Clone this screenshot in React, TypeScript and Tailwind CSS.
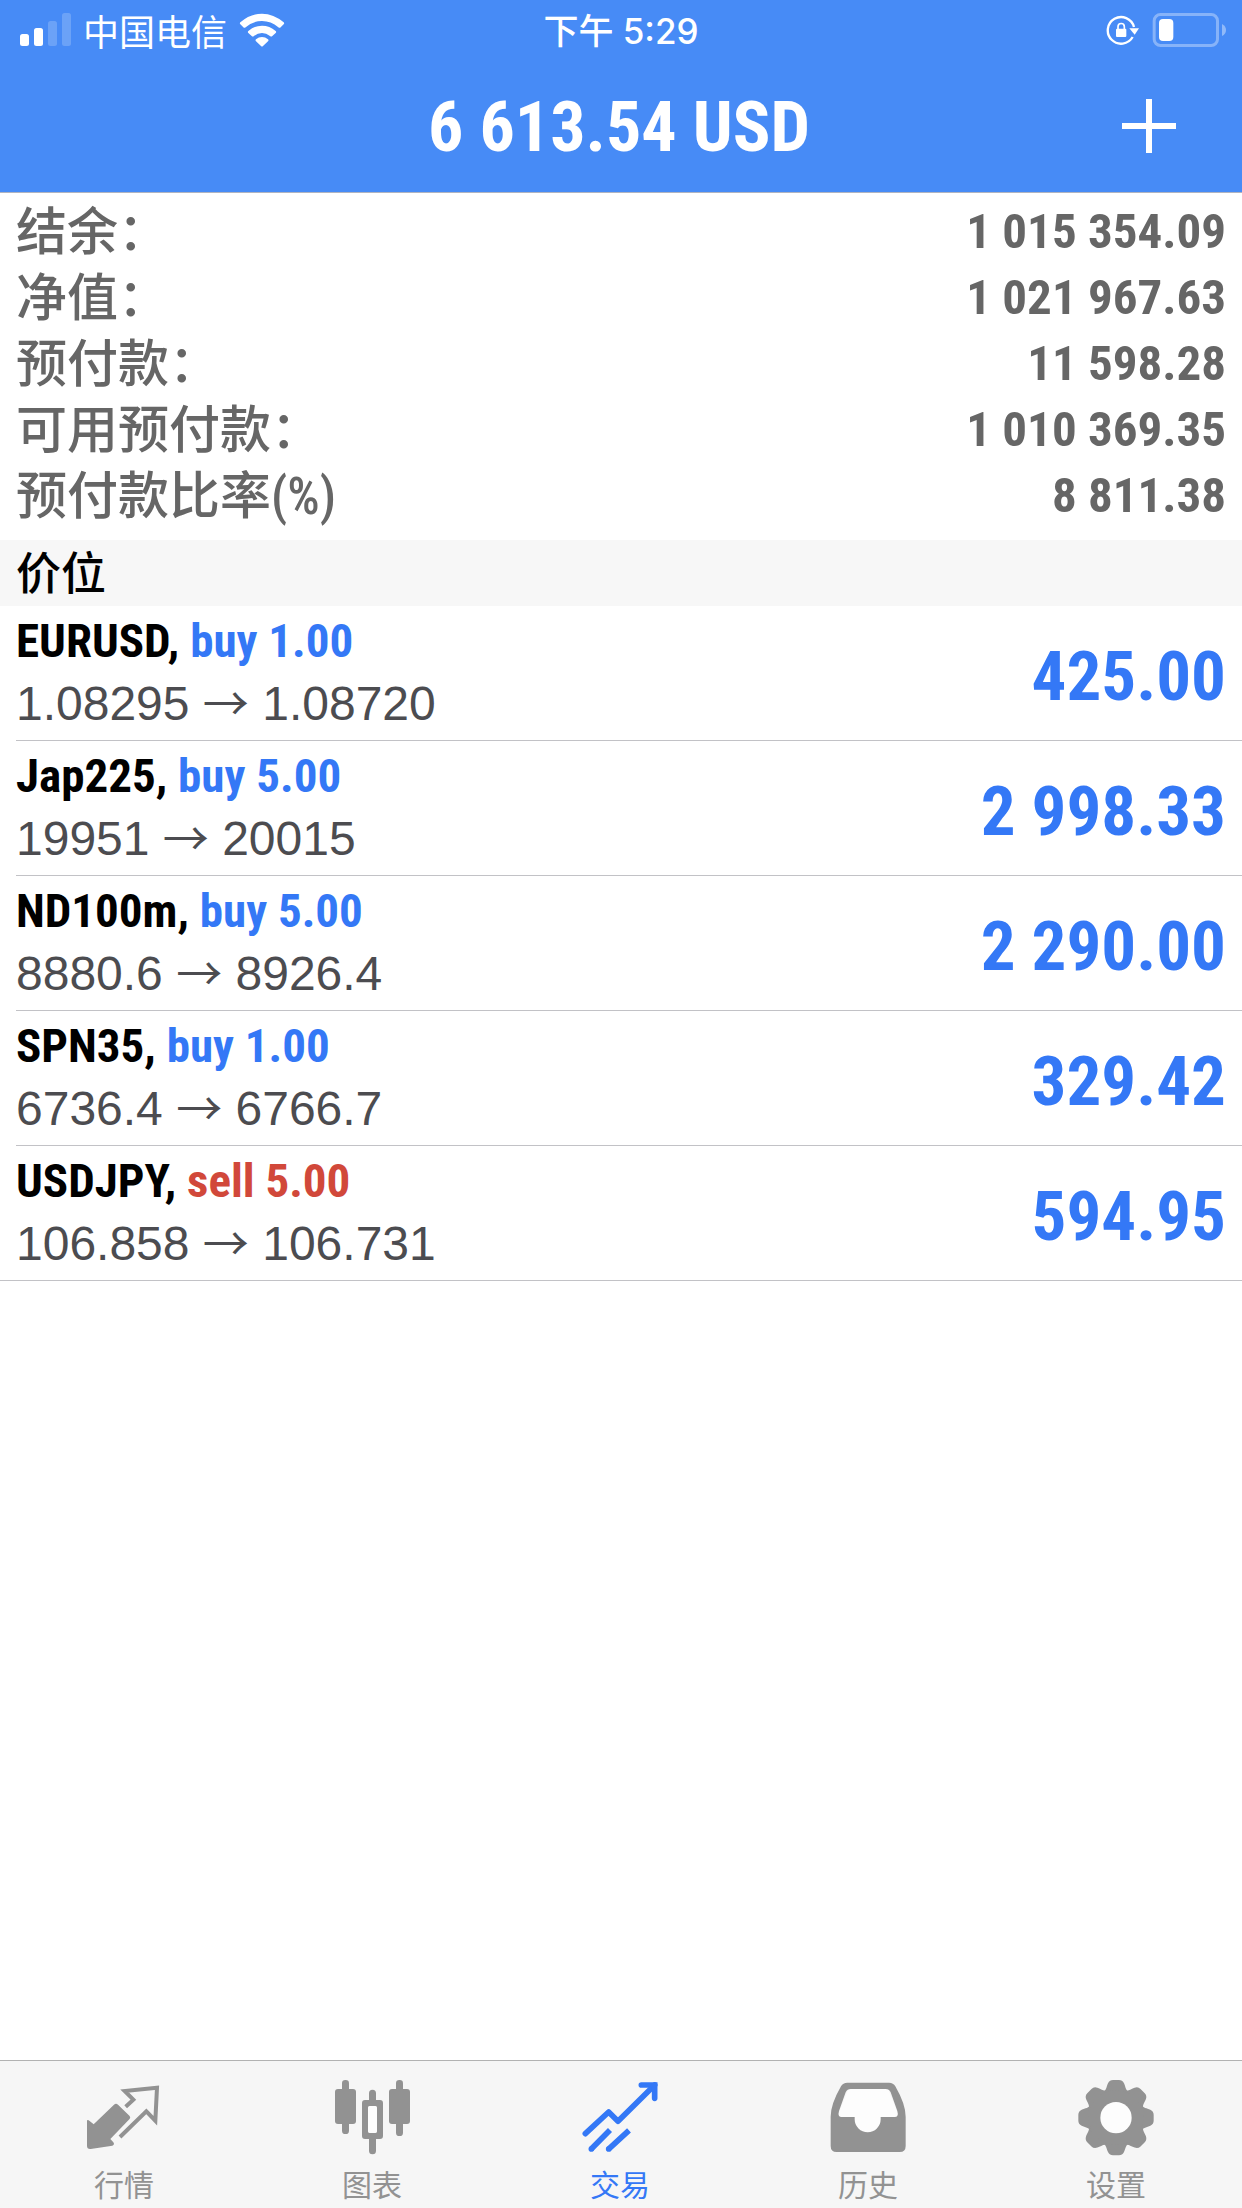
import type { ReactNode } from "react";

type Position = {
  symbol: string;
  side: "buy" | "sell";
  volume: string;
  open: string;
  current: string;
  profit: string;
};

const summary = [
  { label: "结余：", value: "1 015 354.09" },
  { label: "净值：", value: "1 021 967.63" },
  { label: "预付款：", value: "11 598.28" },
  { label: "可用预付款：", value: "1 010 369.35" },
  { label: "预付款比率(%)", value: "8 811.38" },
];

const positions: Position[] = [
  { symbol: "EURUSD", side: "buy", volume: "1.00", open: "1.08295", current: "1.08720", profit: "425.00" },
  { symbol: "Jap225", side: "buy", volume: "5.00", open: "19951", current: "20015", profit: "2 998.33" },
  { symbol: "ND100m", side: "buy", volume: "5.00", open: "8880.6", current: "8926.4", profit: "2 290.00" },
  { symbol: "SPN35", side: "buy", volume: "1.00", open: "6736.4", current: "6766.7", profit: "329.42" },
  { symbol: "USDJPY", side: "sell", volume: "5.00", open: "106.858", current: "106.731", profit: "594.95" },
];

function SignalIcon() {
  return (
    <svg viewBox="0 0 51 34" className="h-[34px] w-[51px]" fill="currentColor" aria-hidden="true">
      <rect x="0" y="21" width="9" height="12" rx="2.5" />
      <rect x="14" y="15" width="9" height="18" rx="2.5" />
      <rect x="28" y="8" width="9" height="25" rx="2.5" opacity="0.2" />
      <rect x="42" y="0" width="9" height="33" rx="2.5" opacity="0.2" />
    </svg>
  );
}

function WifiIcon() {
  return (
    <svg viewBox="729 37 138 102" className="h-[34px] w-[46px]" fill="currentColor" aria-hidden="true">
      <path d="M733 65Q763 39 798 39Q833 39 863 65Q866 68 863 71L854 80Q851 83 847 80Q825 61 798 61Q771 61 749 80Q745 83 742 80L733 71Q730 68 733 65Z" />
      <path d="M757 91Q775 75 798 75Q821 75 839 91Q842 94 839 97L829 106Q826 109 822 106Q811 97 798 97Q785 97 774 106Q770 109 767 106L757 97Q754 94 757 91Z" />
      <path d="M780 116Q788 109 798 109Q808 109 816 116Q819 119 816 122L801 136Q798 139 795 136L780 122Q777 119 780 116Z" />
    </svg>
  );
}

function RotationLockIcon() {
  return (
    <svg viewBox="135 48 102 93" className="h-[31px] w-[34px]" aria-hidden="true">
      <path d="M215 114A40 40 0 1 1 219 84" fill="none" stroke="currentColor" strokeWidth="7" />
      <path d="M205 88H234L221 107Z" fill="currentColor" />
      <rect x="165" y="89" width="31" height="25" rx="3" fill="currentColor" />
      <path d="M171 90V83A9.500 9.500 0 0 1 190 83V90" fill="none" stroke="currentColor" strokeWidth="5" />
    </svg>
  );
}

function BatteryIcon() {
  return (
    <svg viewBox="276 39 222 102" className="h-[34px] w-[74px]" aria-hidden="true">
      <rect x="282.500" y="43.500" width="190" height="93" rx="19" fill="none" stroke="currentColor" strokeWidth="9" opacity="0.35" />
      <path d="M486 72Q498 78 498 90Q498 102 486 108Z" fill="currentColor" opacity="0.4" />
      <rect x="297" y="57" width="43" height="66" rx="12" fill="currentColor" />
    </svg>
  );
}

function QuotesIcon() {
  return (
    <svg viewBox="126 75 252 252" className="size-[84px]" aria-hidden="true">
      <path
        d="M141 213Q141 208 146 211L161 223L222 164Q228 159 234 164L269 198Q273 203 268 208L211 267L220 277Q225 284 217 287L152 297Q141 298 141 288Z"
        fill="currentColor"
      />
      <path
        d="M257 170L280 149L254 123L351 113L346 212L319 184L240 261"
        fill="none"
        stroke="currentColor"
        strokeWidth="12"
      />
    </svg>
  );
}

function ChartIcon() {
  return (
    <svg viewBox="870 75 252 252" className="size-[84px]" fill="currentColor" aria-hidden="true">
      <rect x="906" y="90" width="21" height="162" rx="10" />
      <rect x="885" y="117" width="63" height="105" rx="9" />
      <rect x="1068" y="90" width="21" height="168" rx="10" />
      <rect x="1047" y="117" width="63" height="105" rx="9" />
      <path d="M987 155V130A10 10 0 0 1 1008 130V155ZM987 262V302A10 10 0 0 0 1008 302V262Z" />
      <path
        fillRule="evenodd"
        d="M975 150H1020Q1029 150 1029 159V258Q1029 267 1020 267H975Q966 267 966 258V159Q966 150 975 150ZM991 168Q984 168 984 175V242Q984 249 991 249H1004Q1011 249 1011 242V175Q1011 168 1004 168Z"
      />
      <rect x="984" y="168" width="27" height="81" rx="6" fill="#fdfdfd" />
    </svg>
  );
}

function TradeIcon() {
  return (
    <svg viewBox="112 75 252 252" className="size-[84px]" fill="none" stroke="currentColor" strokeWidth="17" aria-hidden="true">
      <path d="M134 251L204 186L232 214L342 105" strokeLinecap="round" strokeLinejoin="round" />
      <path d="M302 105H342V145" strokeLinecap="round" />
      <path d="M208 240L151 298M265 241L203 298" />
      <circle cx="152" cy="297" r="8.500" fill="currentColor" stroke="none" />
      <circle cx="204" cy="297" r="8.500" fill="currentColor" stroke="none" />
    </svg>
  );
}

function HistoryIcon() {
  return (
    <svg viewBox="856 75 252 252" className="size-[84px]" fill="currentColor" aria-hidden="true">
      <path d="M925 112H1040L1078 205H1025L1020 255H942L938 205H888Z" fill="#fdfdfd" />
      <path
        fillRule="evenodd"
        d="M920 98H1045Q1058 98 1064 109Q1095 163 1095 200V288Q1095 306 1077 306H888Q870 306 870 288V200Q870 163 901 109Q907 98 920 98ZM930 117Q920 117 915 127L895 183Q890 201 903 201H942V208A39 39 0 0 0 1020 208V201H1062Q1075 201 1070 183L1050 127Q1045 117 1035 117Z"
      />
    </svg>
  );
}

function SettingsIcon() {
  return (
    <svg viewBox="103 75 252 252" className="size-[84px]" fill="currentColor" aria-hidden="true">
      {[0, 45, 90, 135, 180, 225, 270, 315].map((angle) => (
        <path
          key={angle}
          transform={`rotate(${angle} 229 203)`}
          d="M187 128C201 122 200 110 205 100Q210 90 220 90H238Q248 90 253 100C258 110 257 122 271 128L262 155H196Z"
        />
      ))}
      <circle cx="229" cy="203" r="82" />
      <circle cx="229" cy="203" r="47" fill="#fdfdfd" />
    </svg>
  );
}

const tabs: { label: string; icon: ReactNode; active?: boolean }[] = [
  { label: "行情", icon: <QuotesIcon /> },
  { label: "图表", icon: <ChartIcon /> },
  { label: "交易", icon: <TradeIcon />, active: true },
  { label: "历史", icon: <HistoryIcon /> },
  { label: "设置", icon: <SettingsIcon /> },
];

function PositionRow({ position, last }: { position: Position; last: boolean }) {
  return (
    <li className={last ? "border-b border-[#c2c2c6]" : "pl-4"}>
      <div
        className={
          last
            ? "flex items-center justify-between px-4 pt-[5px] pb-1"
            : "flex items-center justify-between border-b border-[#c2c2c6] pt-[5px] pr-4 pb-1"
        }
      >
        <div>
          <p className="font-['Roboto_Condensed','Liberation_Sans',sans-serif] text-[47px] leading-[60px] font-bold text-black">
            {position.symbol},{" "}
            <span className={position.side === "buy" ? "text-[#3478f6]" : "text-[#d1483a]"}>
              {position.side} {position.volume}
            </span>
          </p>
          <p className="text-[48px] leading-[65px] text-[#4c4c50]">
            {position.open}{" "}
            <span className="font-['Roboto_Condensed','Noto_Sans_CJK_SC',sans-serif] text-[46px] leading-none font-normal">→</span>{" "}
            {position.current}
          </p>
        </div>
        <p className="pt-1.5 font-['Roboto_Condensed','Liberation_Sans',sans-serif] text-[69px] leading-[80px] font-bold text-[#3478f6]">
          {position.profit}
        </p>
      </div>
    </li>
  );
}

export default function App() {
  return (
    <div className="flex min-h-screen flex-col bg-white font-['Liberation_Sans','Noto_Sans_CJK_SC',sans-serif]">
      <header className="border-b border-[#b0b4c0] bg-[#478bf6] text-white">
        <div className="grid grid-cols-[1fr_auto_1fr] items-center px-4">
          <div className="flex items-center gap-3 pl-1">
            <SignalIcon />
            <span className="font-['Noto_Sans_CJK_SC',sans-serif] text-[36px] leading-[60px]">中国电信</span>
            <WifiIcon />
          </div>
          <time className="pt-0.5 font-['Inter','Noto_Sans_CJK_SC',sans-serif] text-[35px] leading-[58px] font-medium">下午 5:29</time>
          <div className="flex items-center justify-end gap-3">
            <RotationLockIcon />
            <BatteryIcon />
          </div>
        </div>
        <div className="grid grid-cols-[1fr_auto_1fr] items-center pr-[60px] pl-14">
          <span />
          <h1 className="pt-0.5 font-['Roboto_Condensed','Liberation_Sans',sans-serif] text-[70px] leading-[130px] font-bold">
            6 613.54 USD
          </h1>
          <button type="button" aria-label="新订单" className="cursor-pointer justify-self-end p-1.5">
            <svg viewBox="0 0 54 54" className="size-[54px]" aria-hidden="true">
              <path d="M27 0V54M0 27H54" stroke="currentColor" strokeWidth="6" />
            </svg>
          </button>
        </div>
      </header>

      <main className="grow">
        <dl className="px-4 pt-1.5 pb-[11px] text-[#666]">
          {summary.map((item) => (
            <div key={item.label} className="flex items-center justify-between">
              <dt className="pt-0.5 font-['Roboto_Condensed','Noto_Sans_CJK_SC',sans-serif] text-[51px] leading-[64px] font-medium">
                {item.label}
              </dt>
              <dd className="font-['Roboto_Condensed','Liberation_Sans',sans-serif] text-[49px] leading-[66px] font-bold">
                {item.value}
              </dd>
            </div>
          ))}
        </dl>
        <h2 className="bg-[#f7f7f7] px-4 pt-1 font-['Roboto_Condensed','Noto_Sans_CJK_SC',sans-serif] text-[45px] leading-[62px] font-medium text-black">
          价位
        </h2>
        <ul>
          {positions.map((position, index) => (
            <PositionRow key={position.symbol} position={position} last={index === positions.length - 1} />
          ))}
        </ul>
      </main>

      <nav className="grid grid-cols-5 border-t border-[#b2b2b2] bg-[#f6f6f6] pr-0.5">
        {tabs.map((tab) => (
          <button
            key={tab.label}
            type="button"
            aria-current={tab.active ? "page" : undefined}
            className={
              tab.active
                ? "flex cursor-pointer flex-col items-center pt-3.5 pb-1 text-[#3478f6]"
                : "flex cursor-pointer flex-col items-center pt-3.5 pb-1 text-[#929292]"
            }
          >
            {tab.icon}
            <span className="mt-[3px] font-['Noto_Sans_CJK_SC',sans-serif] text-[30px] leading-[42px]">{tab.label}</span>
          </button>
        ))}
      </nav>
    </div>
  );
}
